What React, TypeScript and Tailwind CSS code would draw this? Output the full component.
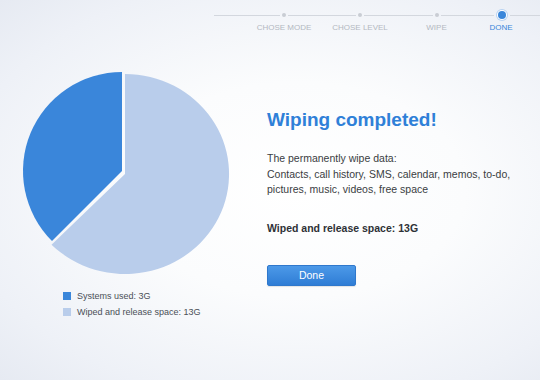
import React from "react";

const Dot = () => <div className="w-[4px] h-[4px] rounded-full bg-[#c9cdd4] mx-[2px]" />;

export default function App() {
  return (
    <div
      className="w-[540px] h-[380px] overflow-hidden bg-[radial-gradient(ellipse_at_55%_50%,#ffffff_0%,#fbfcfd_40%,#eef1f7_80%,#e6eaf2_100%)]"
      style={{ fontFamily: '"Liberation Sans", Arial, sans-serif' }}
    >
      {/* stepper */}
      <div className="h-[40px] pt-[9px]">
        <div className="flex items-center h-[12px] pl-[214px]">
          <div className="w-[66px] h-px bg-[#d3d7de]" />
          <Dot />
          <div className="w-[68px] h-px bg-[#d3d7de]" />
          <Dot />
          <div className="w-[69px] h-px bg-[#d3d7de]" />
          <Dot />
          <div className="w-[53px] h-px bg-[#d3d7de]" />
          <div className="w-[12px] h-[12px] rounded-full bg-[#b7d2f2] flex items-center justify-center mx-[2px]">
            <div className="w-[10px] h-[10px] rounded-full bg-white flex items-center justify-center">
              <div className="w-[8px] h-[8px] rounded-full bg-[#3a86da]" />
            </div>
          </div>
          <div className="flex-1 h-px bg-[#d3d7de]" />
        </div>
        <div className="flex mt-[2px] pl-[246px] text-[8px] leading-[10px] text-[#b3b8c1]">
          <div className="w-[76px] text-center">CHOSE MODE</div>
          <div className="w-[76px] text-center">CHOSE LEVEL</div>
          <div className="w-[77px] text-center">WIPE</div>
          <div className="w-[52px] text-center text-[#3a86da]">DONE</div>
        </div>
      </div>

      <div className="flex">
        {/* left column */}
        <div className="w-[250px] shrink-0">
          <svg width="250" height="220" viewBox="0 0 250 220" className="block mt-[20px]">
            <path d="M125 114 L125 14 A104 100 0 1 1 51.5 184.7 Z" fill="#b9cdeb" />
            <path d="M122 111 L122 12 A99 99 0 0 0 52 181 Z" fill="#3a86da" />
          </svg>
          <div className="mt-[8px] pl-[63px] text-[9px] leading-[16px] text-[#4a4f57]">
            <div className="flex items-center gap-[6px]">
              <div className="w-[8px] h-[8px] bg-[#3a86da]" />
              <span>Systems used: 3G</span>
            </div>
            <div className="flex items-center gap-[6px]">
              <div className="w-[8px] h-[8px] bg-[#b9cdeb]" />
              <span>Wiped and release space: 13G</span>
            </div>
          </div>
        </div>

        {/* right column */}
        <div className="pl-[17px]">
          <div className="mt-[69px] text-[19px] leading-[22px] font-bold text-[#2f80d8]">Wiping completed!</div>
          <div className="mt-[20px] text-[10.5px] leading-[15.5px] text-[#3a3d42]">
            <div>The permanently wipe data:</div>
            <div>Contacts, call history, SMS, calendar, memos, to-do,</div>
            <div>pictures, music, videos, free space</div>
          </div>
          <div className="mt-[23.5px] text-[10.5px] leading-[15.5px] font-bold text-[#2e3136]">
            Wiped and release space: 13G
          </div>
          <button className="mt-[28.5px] w-[89px] h-[21px] rounded-[2px] border border-[#2f78cc] bg-[linear-gradient(#4c99e8,#2f7dd5)] text-white text-[10.5px] flex items-center justify-center shadow-[0_1px_1px_rgba(0,0,0,0.1)]">
            Done
          </button>
        </div>
      </div>
    </div>
  );
}
